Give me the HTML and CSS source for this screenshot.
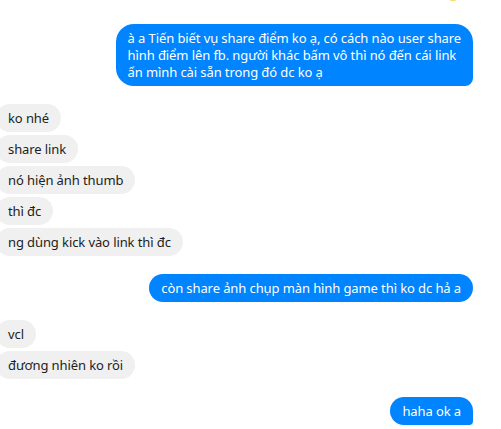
FILE: index.html
```html
<!DOCTYPE html>
<html lang="vi">
<head>
<meta charset="utf-8">
<link rel="stylesheet" href="styles.css">
</head>
<body>
<div class="chat">
  <div class="receipt"></div>
  <div class="group out first-group">
    <div class="bubble out-bubble tail">à a Tiến biết vụ share điểm ko ạ, có cách nào user share<br>hình điểm lên fb. người khác bấm vô thì nó đến cái link<br>ẩn mình cài sẵn trong đó dc ko ạ</div>
  </div>
  <div class="group in">
    <div class="bubble in-bubble">ko nhé</div>
    <div class="bubble in-bubble">share link</div>
    <div class="bubble in-bubble">nó hiện ảnh thumb</div>
    <div class="bubble in-bubble">thì đc</div>
    <div class="bubble in-bubble">ng dùng kick vào link thì đc</div>
  </div>
  <div class="group out">
    <div class="bubble out-bubble">còn share ảnh chụp màn hình game thì ko dc hả a</div>
  </div>
  <div class="group in">
    <div class="bubble in-bubble">vcl</div>
    <div class="bubble in-bubble">đương nhiên ko rồi</div>
  </div>
  <div class="group out">
    <div class="bubble out-bubble last">haha ok a</div>
  </div>
</div>
</body>
</html>
```

FILE: styles.css
```css
html, body {
  margin: 0;
  padding: 0;
  background: #ffffff;
  overflow: hidden;
}

.chat {
  display: flex;
  flex-direction: column;
  width: 501px;
  height: 429px;
  font-family: "Noto Sans", "Open Sans", sans-serif;
  font-size: 13px;
  line-height: 17px;
  letter-spacing: -0.1px;
}

.receipt {
  align-self: flex-end;
  width: 14px;
  height: 14px;
  margin-top: -13px;
  margin-right: 41px;
  border-radius: 50%;
  background: #f9d45c;
}

.group {
  display: flex;
  flex-direction: column;
  gap: 3px;
  margin-top: 18px;
}

.first-group {
  margin-top: 23px;
}

.out {
  align-items: flex-end;
  padding-right: 28px;
}

.in {
  align-items: flex-start;
  margin-left: -4px;
}

.bubble {
  padding: 6px 12px 5px;
  white-space: nowrap;
  border-radius: 14px;
}

.out-bubble {
  background: #0084ff;
  color: #ffffff;
}

.out-bubble.tail {
  border-radius: 18px 18px 8px 18px;
}

.out-bubble.last {
  border-radius: 14px 14px 4px 14px;
}

.in-bubble {
  background: #f1f0f0;
  color: #1c1e21;
}
```
